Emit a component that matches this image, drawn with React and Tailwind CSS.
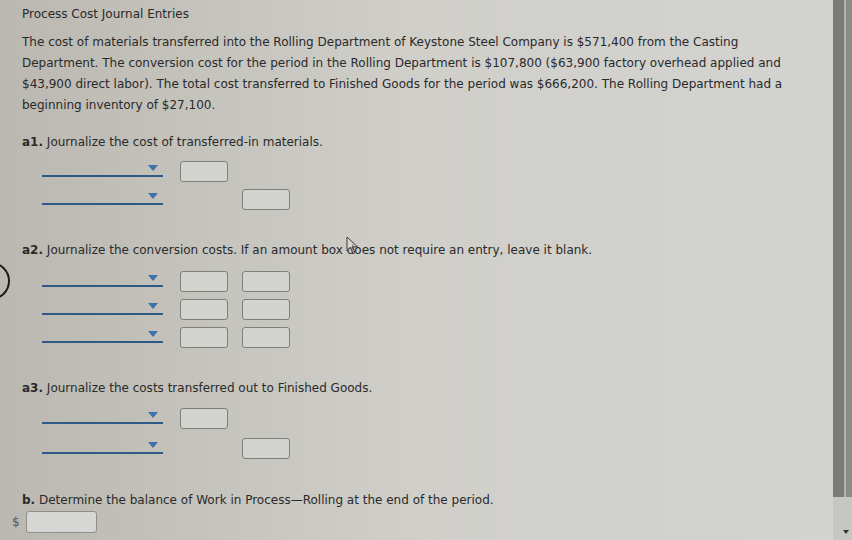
import React from 'react'

const font = { fontFamily: '"DejaVu Sans", Verdana, sans-serif' }

// One account dropdown: blue underline with the small caret at its right end
function AccountSelect() {
  return (
    <div className="w-[121px] h-[16px] border-b-2 border-[#2e5a87] flex items-start justify-end pr-[5px] pt-[4px]">
      <span className="block w-0 h-0 border-l-[5px] border-r-[5px] border-t-[6px] border-l-transparent border-r-transparent border-t-[#3d72ad]" />
    </div>
  )
}

function AmountBox() {
  return <div className="w-[48px] h-[21px] rounded-[3px] border-[1.5px] border-[#7e7e7b] bg-[#d3d3d0]" />
}

// A journal line: dropdown, then debit box, then credit box
function EntryRow({ debit, credit }) {
  return (
    <div className="flex items-start h-[21px] ml-[20px]">
      <AccountSelect />
      <div className="w-[48px] ml-[17px]">{debit && <AmountBox />}</div>
      <div className="w-[48px] ml-[14px]">{credit && <AmountBox />}</div>
    </div>
  )
}

function Label({ tag, children, className = '' }) {
  return (
    <p className={`text-[12px] leading-[20px] ${className}`}>
      <span className="font-bold">{tag}.</span> {children}
    </p>
  )
}

export default function App() {
  return (
    <div
      className="relative w-[852px] h-[540px] overflow-hidden flex bg-gradient-to-r from-[#bab8b0] via-[#d0cfca] to-[#d3d3d1] text-[#2a2a2a]"
      style={font}
    >
      <div className="flex-1 pl-[22px] pt-[4px]">
        <h1 className="text-[12px] leading-[20px]">Process Cost Journal Entries</h1>

        <p className="text-[12px] leading-[21px] mt-[8px] whitespace-nowrap">
          The cost of materials transferred into the Rolling Department of Keystone Steel Company is $571,400 from the Casting
          <br />
          Department. The conversion cost for the period in the Rolling Department is $107,800 ($63,900 factory overhead applied and
          <br />
          $43,900 direct labor). The total cost transferred to Finished Goods for the period was $666,200. The Rolling Department had a
          <br />
          beginning inventory of $27,100.
        </p>

        <Label tag="a1" className="mt-[16px]">Journalize the cost of transferred-in materials.</Label>
        <div className="mt-[9px] flex flex-col gap-[7px]">
          <EntryRow debit />
          <EntryRow credit />
        </div>

        <Label tag="a2" className="mt-[30px]">
          Journalize the conversion costs. If an amount box does not require an entry, leave it blank.
        </Label>
        <div className="mt-[11px] flex flex-col gap-[7px]">
          <EntryRow debit credit />
          <EntryRow debit credit />
          <EntryRow debit credit />
        </div>

        <Label tag="a3" className="mt-[30px]">Journalize the costs transferred out to Finished Goods.</Label>
        <div className="mt-[10px] flex flex-col gap-[9px]">
          <EntryRow debit />
          <EntryRow credit />
        </div>

        <Label tag="b" className="mt-[31px]">
          Determine the balance of Work in Process—Rolling at the end of the period.
        </Label>
        <div className="flex items-center -ml-[10px] mt-[1px]">
          <span className="text-[12px] text-[#555] w-[14px]">$</span>
          <div className="w-[71px] h-[22px] rounded-[3px] border-[1.5px] border-[#8e8e8b] bg-[#d6d6d4]" />
        </div>
      </div>

      {/* window scrollbar on the right edge */}
      <div className="w-[19px] h-full flex flex-col">
        <div className="h-[497px] flex">
          <div className="w-[11px] bg-[#7b7b76]" />
          <div className="w-[2px] bg-[#b4b4ae]" />
          <div className="w-[6px] bg-[#8c8c87]" />
        </div>
        <div className="flex-1 bg-[#c6c6c3] flex items-end justify-end pb-[6px] pr-[3px]">
          <span className="block w-0 h-0 border-l-[3px] border-r-[3px] border-t-[4px] border-l-transparent border-r-transparent border-t-[#333]" />
        </div>
      </div>

      {/* dial edge poking in from the left */}
      <div className="absolute left-[-28px] top-[262px] w-[38px] h-[38px] rounded-full border-[2.5px] border-[#1c1c1c]" />

      {/* mouse pointer */}
      <svg className="absolute left-[346px] top-[236px]" width="14" height="20" viewBox="0 0 14 20">
        <path d="M1 1 L1 15 L4.5 11.5 L7 17.5 L9 16.6 L6.6 10.8 L11.5 10.8 Z" fill="#e4e4e2" fillOpacity="0.5" stroke="#3a3a3a" strokeWidth="1" strokeLinejoin="round" />
      </svg>
    </div>
  )
}
